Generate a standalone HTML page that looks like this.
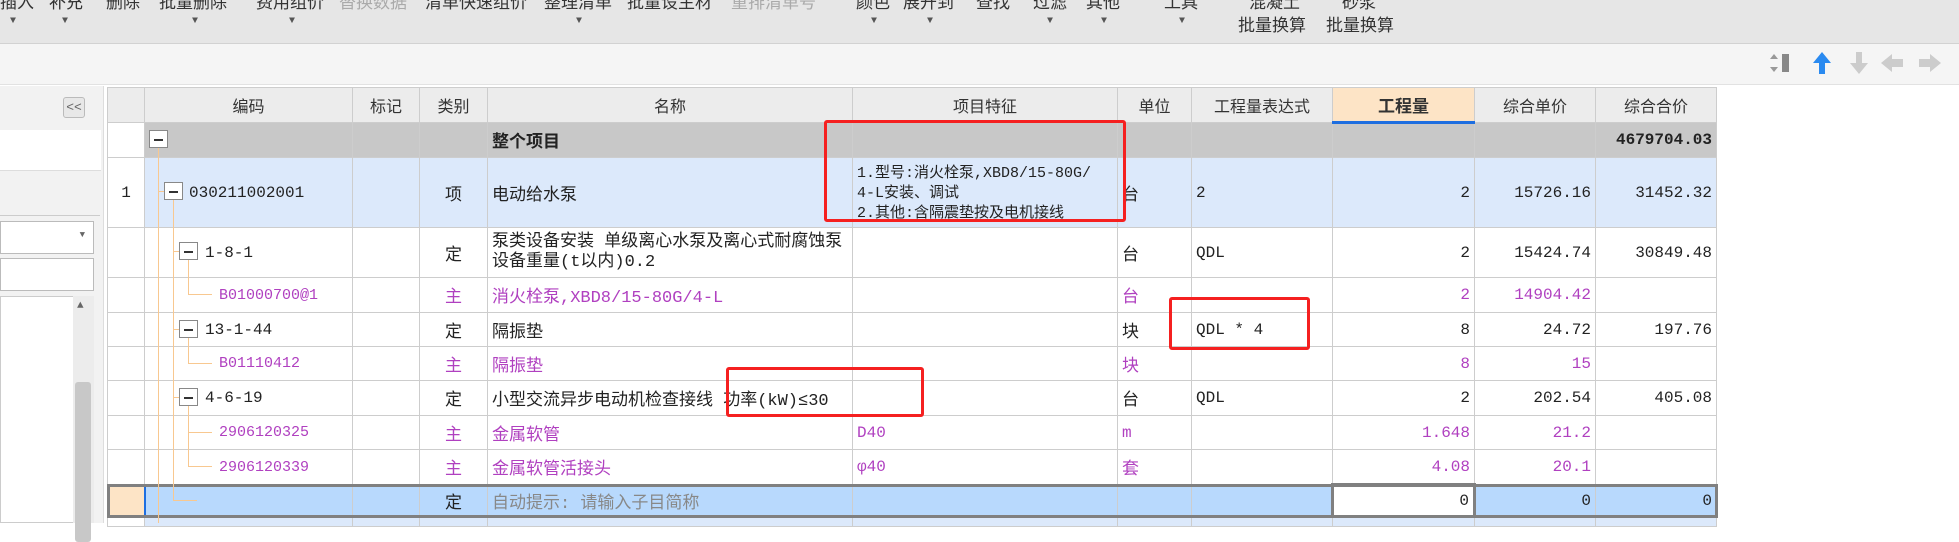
<!DOCTYPE html>
<html><head><meta charset="utf-8"><style>
*{margin:0;padding:0;box-sizing:border-box}
body{width:1959px;height:523px;overflow:hidden;background:#fff;position:relative;font-family:"Liberation Mono","Noto Sans CJK SC",monospace;font-size:16px;color:#222}
.abs{position:absolute}
#tb{left:0;top:0;width:1959px;height:44px;background:#e6e6e6;border-bottom:1px solid #d2d2d2;overflow:hidden}
.tt{position:absolute;top:-12px;font-family:"Liberation Sans","Noto Sans CJK SC",sans-serif;font-size:17px;color:#333;white-space:nowrap}
.gr{color:#aaa}
.ar{position:absolute;top:16px;font-size:10px;color:#555}
#bar{left:0;top:44px;width:1959px;height:41px;background:#f5f5f5;border-bottom:1px solid #e2e2e2}
#left{left:0;top:86px;width:104px;height:437px;background:#f2f2f2;border-right:1px solid #ddd}
table{position:absolute;left:107px;top:87px;border-collapse:collapse;table-layout:fixed}
td{border:1px solid #cdcdcd;white-space:nowrap;overflow:hidden;padding:0 4px;vertical-align:middle}
th{border:1px solid #cdcdcd;background:#ececec;font-weight:normal;font-family:"Liberation Sans","Noto Sans CJK SC",sans-serif;font-size:16px;color:#333}
.c{text-align:center}.r{text-align:right}
.p{color:#b040c0}
.box{position:absolute;width:19px;height:18px;border:1px solid #888;background:#fff}
.box:after{content:"";position:absolute;left:4px;top:8px;width:9px;height:1.5px;background:#333}
.vl{position:absolute;width:1px;background:#f8c890}
.hl{position:absolute;height:1px;background:#f8c890}
.red{position:absolute;border:3px solid #f52020;border-radius:3px}
</style></head><body>
<div id="tb" class="abs">
<span class="tt" style="left:0">插入</span><span class="tt" style="left:49px">补充</span><span class="tt" style="left:106px">删除</span><span class="tt" style="left:159px">批量删除</span><span class="tt" style="left:256px">费用组价</span><span class="tt gr" style="left:339px">替换数据</span><span class="tt" style="left:425px">清单快速组价</span><span class="tt" style="left:544px">整理清单</span><span class="tt" style="left:627px">批量设主材</span><span class="tt gr" style="left:731px">重排清单号</span><span class="tt" style="left:856px">颜色</span><span class="tt" style="left:903px">展开到</span><span class="tt" style="left:976px">查找</span><span class="tt" style="left:1033px">过滤</span><span class="tt" style="left:1086px">其他</span><span class="tt" style="left:1164px">工具</span><span class="tt" style="left:1249px">混凝土</span><span class="tt" style="left:1342px">砂浆</span>
<span class="tt" style="left:1238px;top:11px">批量换算</span><span class="tt" style="left:1326px;top:11px">批量换算</span>
<span class="ar" style="left:10px">▼</span><span class="ar" style="left:62px">▼</span><span class="ar" style="left:192px">▼</span><span class="ar" style="left:289px">▼</span><span class="ar" style="left:576px">▼</span><span class="ar" style="left:871px">▼</span><span class="ar" style="left:927px">▼</span><span class="ar" style="left:1047px">▼</span><span class="ar" style="left:1101px">▼</span><span class="ar" style="left:1179px">▼</span>
</div>
<div id="bar" class="abs">
<svg class="abs" style="left:1768px;top:8px" width="180" height="26">
<path d="M6 2 L10 7 L2 7Z M6 20 L10 15 L2 15Z" fill="#999"/><rect x="14" y="2" width="7" height="18" fill="#888"/>
<path d="M54 0 L63 11 L57 11 L57 22 L51 22 L51 11 L45 11Z" fill="#2a8af0"/>
<path d="M91 22 L100 11 L94 11 L94 0 L88 0 L88 11 L82 11Z" fill="#ccc"/>
<path d="M113 11 L124 2 L124 7 L135 7 L135 15 L124 15 L124 20Z" fill="#ccc"/>
<path d="M173 11 L162 2 L162 7 L151 7 L151 15 L162 15 L162 20Z" fill="#ccc"/>
</svg>
</div>
<div id="left" class="abs">
<div class="abs" style="left:63px;top:11px;width:22px;height:21px;border:1px solid #bbb;border-radius:3px;background:#e8e8e8;font-size:13px;line-height:19px;text-align:center;color:#666">&lt;&lt;</div>
<div class="abs" style="left:0;top:44px;width:101px;height:41px;background:#fff;border-bottom:1px solid #ddd"></div>
<div class="abs" style="left:0;top:129px;width:100px;height:1px;background:#ccc"></div>
<div class="abs" style="left:0;top:135px;width:94px;height:33px;background:#fff;border:1px solid #bbb"><span style="position:absolute;right:8px;top:8px;font-size:9px;color:#666">▼</span></div>
<div class="abs" style="left:0;top:172px;width:94px;height:33px;background:#fff;border:1px solid #bbb"></div>
<div class="abs" style="left:0;top:210px;width:94px;height:227px;background:#fff;border:1px solid #ccc"></div>
<div class="abs" style="left:73px;top:210px;width:21px;height:227px;background:#ececec"><span style="position:absolute;left:4px;top:4px;font-size:11px;color:#666">▲</span><div style="position:absolute;left:2px;top:86px;width:16px;height:160px;background:#c8c8c8;border-radius:3px"></div></div>
</div>
<table>
<colgroup><col style="width:37px"><col style="width:208px"><col style="width:67px"><col style="width:68px"><col style="width:365px"><col style="width:265px"><col style="width:74px"><col style="width:141px"><col style="width:142px"><col style="width:121px"><col style="width:121px"></colgroup>
<tr style="height:35px"><th></th><th>编码</th><th>标记</th><th>类别</th><th>名称</th><th>项目特征</th><th>单位</th><th>工程量表达式</th><th style="background:#fde4c6;border-bottom:3px solid #1e6ee0;font-weight:bold;font-size:17px">工程量</th><th>综合单价</th><th>综合合价</th></tr>
<tr style="height:35px;background:#c8c8c8"><td style="background:#fff"></td><td></td><td></td><td></td><td style="font-weight:bold;font-size:17px">整个项目</td><td></td><td></td><td></td><td></td><td></td><td class="r" style="font-weight:bold">4679704.03</td></tr>
<tr style="height:70px;background:#dce9fb"><td class="c" style="background:#fff">1</td><td style="padding-left:44px">030211002001</td><td></td><td class="c" style="font-size:17px">项</td><td style="font-size:17px">电动给水泵</td><td style="font-size:15px;line-height:20px;vertical-align:top;padding-top:6px;white-space:normal">1.型号:消火栓泵,XBD8/15-80G/<br>4-L安装、调试<br>2.其他:含隔震垫按及电机接线</td><td style="font-size:17px">台</td><td>2</td><td class="r">2</td><td class="r">15726.16</td><td class="r">31452.32</td></tr>
<tr style="height:50px"><td></td><td style="padding-left:60px">1-8-1</td><td></td><td class="c" style="font-size:17px">定</td><td style="white-space:normal;line-height:20px;font-size:17px">泵类设备安装 单级离心水泵及离心式耐腐蚀泵 设备重量(t以内)0.2</td><td></td><td style="font-size:17px">台</td><td>QDL</td><td class="r">2</td><td class="r">15424.74</td><td class="r">30849.48</td></tr>
<tr style="height:35px" class="p"><td></td><td style="padding-left:74px;font-size:15px">B01000700@1</td><td></td><td class="c" style="font-size:17px">主</td><td style="font-size:17px">消火栓泵,XBD8/15-80G/4-L</td><td></td><td style="font-size:17px">台</td><td></td><td class="r">2</td><td class="r">14904.42</td><td></td></tr>
<tr style="height:34px"><td></td><td style="padding-left:60px">13-1-44</td><td></td><td class="c" style="font-size:17px">定</td><td style="font-size:17px">隔振垫</td><td></td><td style="font-size:17px">块</td><td>QDL * 4</td><td class="r">8</td><td class="r">24.72</td><td class="r">197.76</td></tr>
<tr style="height:34px" class="p"><td></td><td style="padding-left:74px;font-size:15px">B01110412</td><td></td><td class="c" style="font-size:17px">主</td><td style="font-size:17px">隔振垫</td><td></td><td style="font-size:17px">块</td><td></td><td class="r">8</td><td class="r">15</td><td></td></tr>
<tr style="height:35px"><td></td><td style="padding-left:60px">4-6-19</td><td></td><td class="c" style="font-size:17px">定</td><td style="font-size:17px">小型交流异步电动机检查接线 功率(kW)≤30</td><td></td><td style="font-size:17px">台</td><td>QDL</td><td class="r">2</td><td class="r">202.54</td><td class="r">405.08</td></tr>
<tr style="height:34px" class="p"><td></td><td style="padding-left:74px;font-size:15px">2906120325</td><td></td><td class="c" style="font-size:17px">主</td><td style="font-size:17px">金属软管</td><td>D40</td><td>m</td><td></td><td class="r">1.648</td><td class="r">21.2</td><td></td></tr>
<tr style="height:35px" class="p"><td></td><td style="padding-left:74px;font-size:15px">2906120339</td><td></td><td class="c" style="font-size:17px">主</td><td style="font-size:17px">金属软管活接头</td><td>φ40</td><td style="font-size:17px">套</td><td></td><td class="r">4.08</td><td class="r">20.1</td><td></td></tr>
<tr style="height:32px;background:#b8d9fd;outline:3px solid #808080;outline-offset:-2px"><td style="background:#fde4c6"></td><td style="border-left:2px solid #1e6ee0"></td><td></td><td class="c" style="font-size:17px">定</td><td style="color:#888;font-size:17px">自动提示: 请输入子目简称</td><td></td><td></td><td></td><td class="r" style="background:#fff;border:3px solid #808080">0</td><td class="r">0</td><td class="r">0</td></tr>
<tr style="height:10px;background:#dce9fb"><td style="background:#fff"></td><td></td><td></td><td></td><td></td><td></td><td></td><td></td><td></td><td></td><td></td></tr>
</table>
<div class="vl" style="left:158px;top:148px;height:375px"></div>
<div class="hl" style="left:158px;top:191px;width:6px"></div>
<div class="vl" style="left:173px;top:200px;height:301px"></div>
<div class="hl" style="left:173px;top:500px;width:24px"></div>
<div class="hl" style="left:173px;top:251px;width:6px"></div>
<div class="hl" style="left:173px;top:329px;width:6px"></div>
<div class="hl" style="left:173px;top:397px;width:6px"></div>
<div class="vl" style="left:188px;top:260px;height:34px"></div>
<div class="hl" style="left:188px;top:294px;width:24px"></div>
<div class="vl" style="left:188px;top:338px;height:25px"></div>
<div class="hl" style="left:188px;top:363px;width:24px"></div>
<div class="vl" style="left:188px;top:406px;height:60px"></div>
<div class="hl" style="left:188px;top:432px;width:24px"></div>
<div class="hl" style="left:188px;top:466px;width:24px"></div>
<div class="box" style="left:149px;top:130px"></div>
<div class="box" style="left:164px;top:182px"></div>
<div class="box" style="left:179px;top:242px"></div>
<div class="box" style="left:179px;top:320px"></div>
<div class="box" style="left:179px;top:388px"></div>
<div class="red" style="left:824px;top:120px;width:302px;height:102px"></div>
<div class="red" style="left:1169px;top:297px;width:141px;height:53px"></div>
<div class="red" style="left:726px;top:367px;width:198px;height:50px"></div>
</body></html>
